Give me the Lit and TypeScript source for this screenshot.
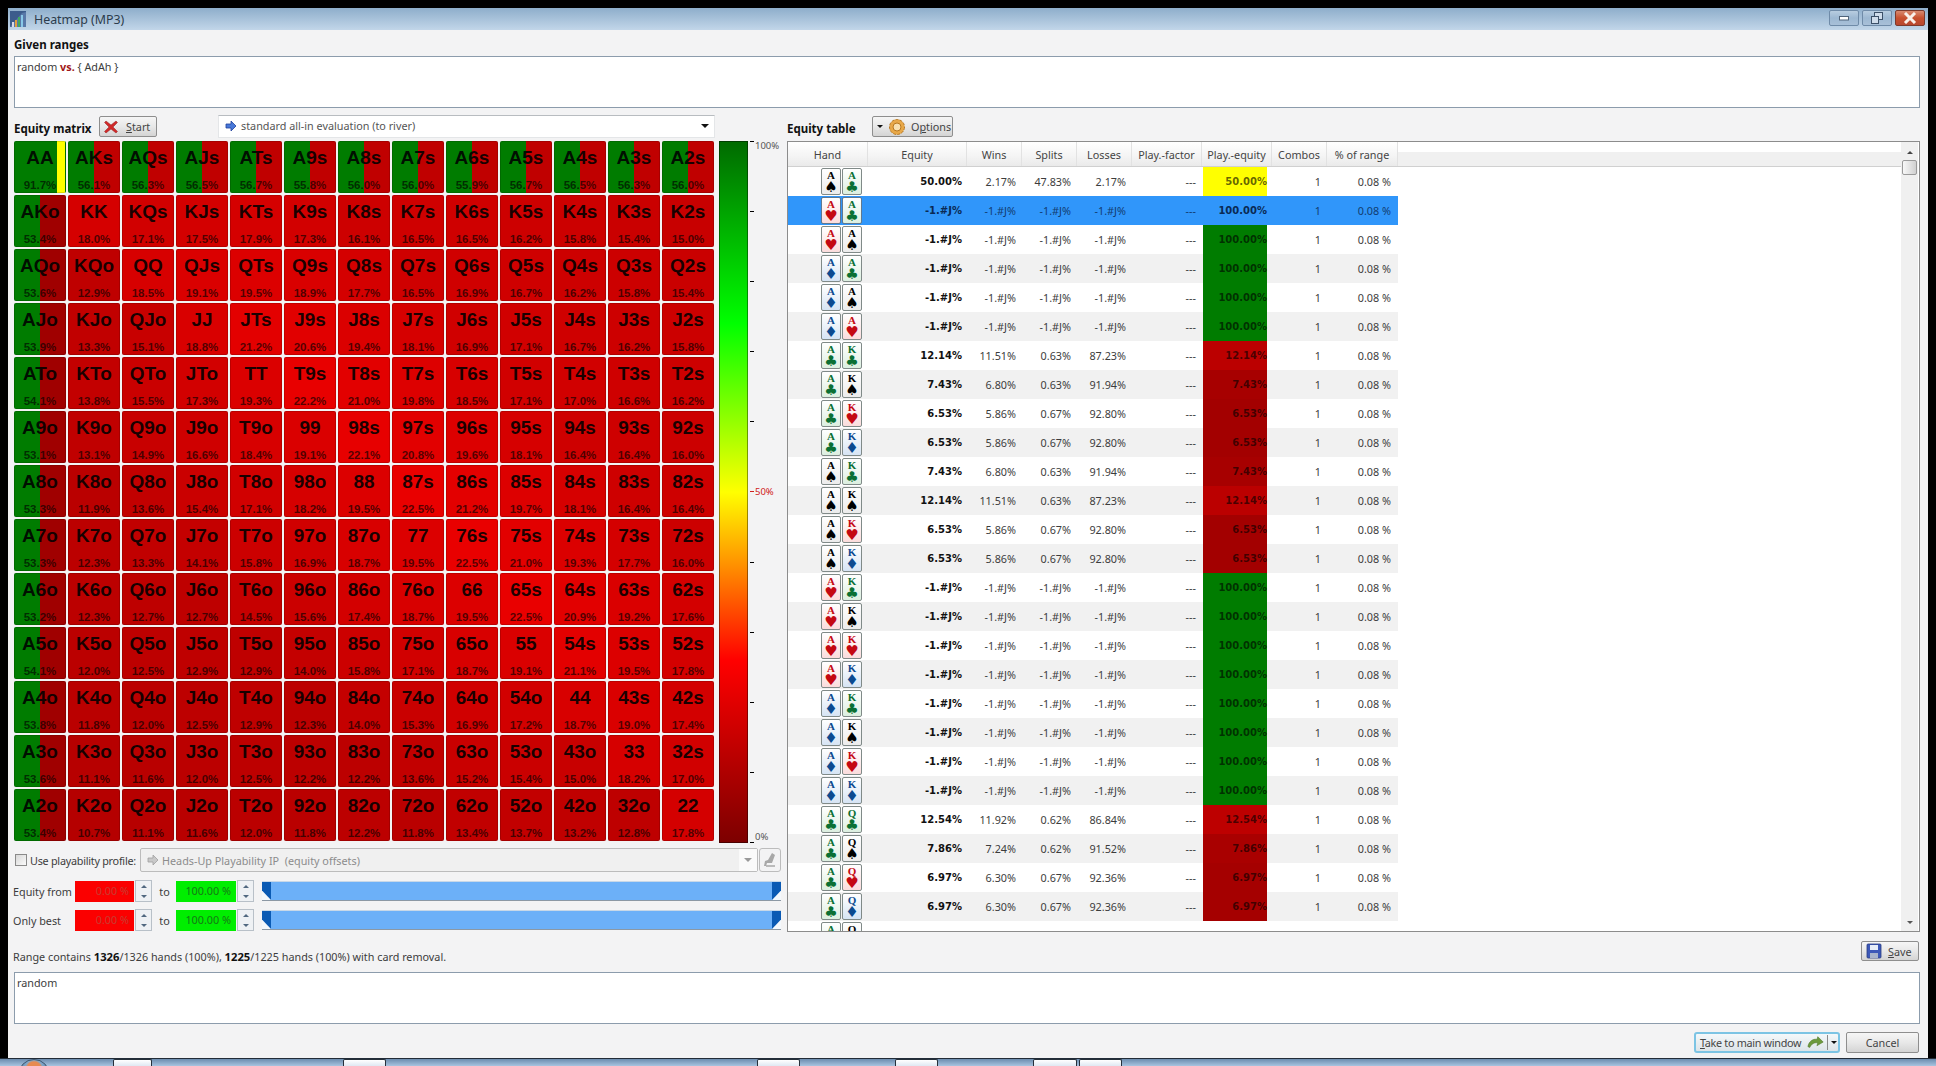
import { LitElement, html, css, svg } from "lit";
import { customElement } from "lit/decorators.js";

const MATRIX = `AA 91.7|AKs 56.1|AQs 56.3|AJs 56.5|ATs 56.7|A9s 55.8|A8s 56.0|A7s 56.0|A6s 55.9|A5s 56.7|A4s 56.5|A3s 56.3|A2s 56.0
AKo 53.4|KK 18.0|KQs 17.1|KJs 17.5|KTs 17.9|K9s 17.3|K8s 16.1|K7s 16.5|K6s 16.5|K5s 16.2|K4s 15.8|K3s 15.4|K2s 15.0
AQo 53.6|KQo 12.9|QQ 18.5|QJs 19.1|QTs 19.5|Q9s 18.9|Q8s 17.7|Q7s 16.5|Q6s 16.9|Q5s 16.7|Q4s 16.2|Q3s 15.8|Q2s 15.4
AJo 53.9|KJo 13.3|QJo 15.1|JJ 18.8|JTs 21.2|J9s 20.6|J8s 19.4|J7s 18.1|J6s 16.9|J5s 17.1|J4s 16.7|J3s 16.2|J2s 15.8
ATo 54.1|KTo 13.8|QTo 15.5|JTo 17.3|TT 19.3|T9s 22.2|T8s 21.0|T7s 19.8|T6s 18.5|T5s 17.1|T4s 17.0|T3s 16.6|T2s 16.2
A9o 53.1|K9o 13.1|Q9o 14.9|J9o 16.6|T9o 18.4|99 19.1|98s 22.1|97s 20.8|96s 19.6|95s 18.1|94s 16.4|93s 16.4|92s 16.0
A8o 53.3|K8o 11.9|Q8o 13.6|J8o 15.4|T8o 17.1|98o 18.2|88 19.5|87s 22.5|86s 21.2|85s 19.7|84s 18.1|83s 16.4|82s 16.4
A7o 53.3|K7o 12.3|Q7o 13.3|J7o 14.1|T7o 15.8|97o 16.9|87o 18.7|77 19.5|76s 22.5|75s 21.0|74s 19.3|73s 17.7|72s 16.0
A6o 53.2|K6o 12.3|Q6o 12.7|J6o 12.7|T6o 14.5|96o 15.6|86o 17.4|76o 18.7|66 19.5|65s 22.5|64s 20.9|63s 19.2|62s 17.6
A5o 54.1|K5o 12.0|Q5o 12.5|J5o 12.9|T5o 12.9|95o 14.0|85o 15.8|75o 17.1|65o 18.7|55 19.1|54s 21.1|53s 19.5|52s 17.8
A4o 53.8|K4o 11.8|Q4o 12.0|J4o 12.5|T4o 12.9|94o 12.3|84o 14.0|74o 15.3|64o 16.9|54o 17.2|44 18.7|43s 19.0|42s 17.4
A3o 53.6|K3o 11.1|Q3o 11.6|J3o 12.0|T3o 12.5|93o 12.2|83o 12.2|73o 13.6|63o 15.2|53o 15.4|43o 15.0|33 18.2|32s 17.0
A2o 53.4|K2o 10.7|Q2o 11.1|J2o 11.6|T2o 12.0|92o 11.8|82o 12.2|72o 11.8|62o 13.4|52o 13.7|42o 13.2|32o 12.8|22 17.8`;

const NA = "-1.#J";
const T = (c1: string, c2: string, e: string, w: string, s: string, l: string) => ({ c1, c2, e, w, s, l });
const X = (c1: string, c2: string) => T(c1, c2, NA, NA, NA, NA);
const ROWS = [
  T("As", "Ac", "50.00", "2.17", "47.83", "2.17"),
  X("Ah", "Ac"), X("Ah", "As"), X("Ad", "Ac"), X("Ad", "As"), X("Ad", "Ah"),
  T("Ac", "Kc", "12.14", "11.51", "0.63", "87.23"),
  T("Ac", "Ks", "7.43", "6.80", "0.63", "91.94"),
  T("Ac", "Kh", "6.53", "5.86", "0.67", "92.80"),
  T("Ac", "Kd", "6.53", "5.86", "0.67", "92.80"),
  T("As", "Kc", "7.43", "6.80", "0.63", "91.94"),
  T("As", "Ks", "12.14", "11.51", "0.63", "87.23"),
  T("As", "Kh", "6.53", "5.86", "0.67", "92.80"),
  T("As", "Kd", "6.53", "5.86", "0.67", "92.80"),
  X("Ah", "Kc"), X("Ah", "Ks"), X("Ah", "Kh"), X("Ah", "Kd"),
  X("Ad", "Kc"), X("Ad", "Ks"), X("Ad", "Kh"), X("Ad", "Kd"),
  T("Ac", "Qc", "12.54", "11.92", "0.62", "86.84"),
  T("Ac", "Qs", "7.86", "7.24", "0.62", "91.52"),
  T("Ac", "Qh", "6.97", "6.30", "0.67", "92.36"),
  T("Ac", "Qd", "6.97", "6.30", "0.67", "92.36"),
];

const GREEN = "#007c00";
const SUITS: Record<string, string> = { s: "♠", h: "♥", d: "♦", c: "♣" };
const redOf = (v: number) => `rgb(${Math.min(255, Math.round(134 + v * 4.4))},0,0)`;

function cellBg(name: string, v: number): string {
  if (name === "AA") return `linear-gradient(90deg,${GREEN} 83%,#ffff00 83% 98%,${GREEN} 98%)`;
  if (name[0] === "A" && v > 50) {
    const red = name.endsWith("s") ? "#c00000" : "#a00000";
    return `linear-gradient(90deg,${GREEN} 50%,${red} 50%)`;
  }
  return redOf(v);
}

const TICKS = [0, 1, 2, 3, 4, 5, 6, 7, 8, 9, 10];

@customElement("app-root")
export class AppRoot extends LitElement {
  static styles = css`
    :host { display: block; width: 1936px; height: 1066px; background: #000; overflow: hidden;
      font-family: "Noto Sans", "Open Sans", sans-serif; font-size: 10.8px; color: #3c3c3c; }
    .shell { width: 1920px; height: 1066px; margin-left: 8px; padding-top: 8px; box-sizing: border-box;
      display: flex; flex-direction: column; }
    .titlebar { height: 22px; flex: none; display: flex; align-items: center; padding-left: 2px;
      background: linear-gradient(#8eaecb, #c2d6e9); }
    .titlebar .ttl { margin-left: 8px; font-size: 12.4px; color: #2c3c4c; }
    .winbtns { margin-left: auto; display: flex; gap: 3px; padding-right: 3px; align-self: flex-start; margin-top: 2px; }
    .wb { width: 30px; height: 16px; border: 1px solid #6f8ba8; border-radius: 2px; box-sizing: border-box;
      background: linear-gradient(#b8cde0, #9db8d2 50%, #a8c0d8); display: flex; align-items: center; justify-content: center; }
    .wb.close { background: linear-gradient(#d88a70, #c8502e 50%, #b84830); border-color: #7c3a2c; }
    .body { flex: 1; background: #f3f3f4; display: flex; flex-direction: column; padding: 0 8px 0 6px; min-height: 0; }
    .b { font-weight: 700; color: #111; font-size: 11.5px; }
    .sect { height: 14px; line-height: 14px; margin-top: 8px; }
    .memo { background: #fff; border: 1px solid #8c9cac; box-sizing: border-box; height: 52px; padding: 3px 2px; line-height: 13px; }
    .memo.top { margin-top: 4px; }
    .vs { color: #a01818; font-weight: 700; }
    .main { display: flex; margin-top: 7px; height: 817px; flex: none; }
    .left { width: 767px; flex: none; display: flex; flex-direction: column; }
    .right { width: 1133px; margin-left: 6px; flex: none; display: flex; flex-direction: column; }
    .hdr { height: 26px; flex: none; display: flex; align-items: center; }
    .hdr .b { width: 85px; flex: none; white-space: nowrap; }
    .btn { display: flex; align-items: center; box-sizing: border-box; height: 20px; border: 1px solid #8e8e8e; border-radius: 2px;
      background: linear-gradient(#f6f6f6, #e8e8e8 50%, #d4d4d4); color: #444; white-space: nowrap; }
    .btn svg { flex: none; }
    .start { width: 58px; height: 21px; padding-left: 4px; gap: 8px; align-self: flex-start; margin-top: 1px; }
    .opts { width: 81px; height: 21px; padding-left: 4px; gap: 3px; align-self: flex-start; margin-top: 1px; }
    .opts .ic { margin-left: 1px; }
    .opts .tx { margin-left: 1px; }
    .combo { margin-left: 61px; width: 497px; height: 23px; box-sizing: border-box; background: #fff; border: 1px solid #e4e6e8; border-top-color: #b8bcc0;
      display: flex; align-items: center; padding: 0 0 2px 6px; gap: 4px; color: #555; align-self: flex-start; }
    .combo .arr { margin-left: auto; width: 19px; display: flex; justify-content: center; }
    .caret { width: 0; height: 0; border-left: 4px solid transparent; border-right: 4px solid transparent; border-top: 4px solid #111; flex: none; }
    .caret.sm { border-width: 3px 3px 0; }
    .matrixrow { display: flex; height: 702px; flex: none; }
    .matrix { width: 702px; height: 702px; flex: none; display: grid; grid-template-columns: repeat(13, 52px); grid-auto-rows: 52px; gap: 2px; }
    .cell { border-radius: 2px; box-shadow: inset 0 0 0 1px rgba(0,0,0,.14); display: flex; flex-direction: column; align-items: center;
      font-family: "Liberation Sans", Arial, sans-serif; font-weight: 700; }
    .cell .n { font-size: 19px; line-height: 22px; margin-top: 6px; color: rgba(0,0,0,.88); }
    .cell .p { font-size: 11.5px; line-height: 14px; margin-top: 9px; color: rgba(0,0,0,.65); }
    .bar { width: 29px; margin-left: 3px; flex: none; height: 702px; box-shadow: inset 0 0 0 1px rgba(0,0,0,.4);
      background: linear-gradient(#006a00 0, #00ff00 26%, #ffff00 50%, #ff0000 74%, #7c0000 100%); }
    .scale { flex: 1; display: flex; flex-direction: column; justify-content: space-between; height: 702px; padding-left: 2px; }
    .tick { height: 1px; display: flex; align-items: center; gap: 1px; font-size: 9.5px; color: #555; white-space: nowrap; }
    .tick i { width: 4px; height: 1px; background: #000; flex: none; }
    .tick.red { color: #d02020; }
    .tick.red i { background: #d02020; }
    .tick.first span { margin-top: 8px; }
    .tick.last span { margin-top: -11px; }
    .play { display: flex; height: 24px; margin-top: 5px; align-items: center; flex: none; }
    .check { width: 12px; height: 12px; border: 1px solid #8a8a8a; background: linear-gradient(135deg,#d8d8d8,#fafafa); box-sizing: border-box; margin-left: 1px; flex: none; }
    .play .lbl { margin-left: 3px; width: 110px; flex: none; white-space: nowrap; letter-spacing: -.25px; }
    .pcombo { width: 618px; height: 24px; box-sizing: border-box; border: 1px solid #bcbcbc; border-radius: 2px; background: #f0f0f0; display: flex; align-items: center; padding-left: 6px; gap: 3px; color: #8c8c8c; flex: none; }
    .pcombo .arr { margin-left: auto; width: 18px; height: 22px; background: #fafafa; display: flex; align-items: center; justify-content: center; }
    .pcombo .caret { border-top-color: #999; }
    .pen { width: 22px; height: 24px; margin-left: 1px; box-sizing: border-box; border: 1px solid #bcbcbc; border-radius: 3px; display: flex; align-items: center; justify-content: center; flex: none; }
    .range { display: flex; height: 22px; align-items: center; margin-top: 7px; flex: none; }
    .range.first { margin-top: 8px; }
    .range .lbl { width: 62px; flex: none; margin-left: -1px; white-space: nowrap; }
    .num { width: 59px; height: 21px; box-sizing: border-box; text-align: right; padding-right: 5px; line-height: 19px; flex: none; }
    .num.r { background: #fb0000; color: #c83c30; }
    .num.g { background: #00ee00; color: #167a16; width: 60px; }
    .spin { width: 17px; height: 22px; box-sizing: border-box; margin-left: 1px; border: 1px solid #b8c0c8; background: #eef1f4; display: flex; flex-direction: column; align-items: center; justify-content: space-around; flex: none; }
    .spin i { width: 0; height: 0; border-left: 3px solid transparent; border-right: 3px solid transparent; }
    .spin i.u { border-bottom: 3px solid #506880; }
    .spin i.d { border-top: 3px solid #506880; }
    .to { width: 23px; text-align: center; flex: none; margin-left: 1px; }
    .slider { margin-left: 8px; width: 519px; height: 20px; display: flex; flex: none; border-top: 1px solid #c8d8e8; border-bottom: 1px solid #8c98a4; box-sizing: border-box; }
    .slider .fill { flex: 1; background: #6cb0f8; }
    .slider svg { flex: none; display: block; }
    .tablebox { height: 791px; flex: none; border: 1px solid #8c8c8c; box-sizing: border-box; background: #fff; display: flex; }
    .grid { flex: 1; overflow: hidden; min-width: 0; }
    .thead { display: flex; height: 25px; background: linear-gradient(#fff 0 10px, #f0f0f0 10px); border-bottom: 1px solid #d0d0d0; box-sizing: border-box; }
    .th { box-sizing: border-box; flex: none; text-align: center; line-height: 21px; padding-top: 2px; color: #444; background: linear-gradient(#fff, #f4f4f4 60%, #eaeaea); border-right: 1px solid #e2e2e2; white-space: nowrap; }
    .th.w80 { width: 80px; } .th.w99 { width: 99px; } .th.w55 { width: 55px; } .th.w70 { width: 70px; } .th.w71 { width: 71px; }
    .tr { display: flex; height: 29px; align-items: stretch; width: 610px; background: #fff; }
    .tr.alt { background: #f1f1f1; }
    .tr.sel { background: #3096fa; color: #123c70; }
    .td { box-sizing: border-box; flex: none; text-align: right; line-height: 29px; padding-right: 6px; }
    .td.eq { font: 700 10px/29px "DejaVu Sans", sans-serif; color: #111; padding-right: 5px; }
    .tr.sel .td.eq { color: #0a2a54; }
    .c-hand { width: 80px; display: flex; padding: 1px 0 0 33px; gap: 1px; box-sizing: border-box; flex: none; }
    .c-eq { width: 99px; } .c-n { width: 55px; } .c-pf { width: 70px; }
    .c-pe { width: 70px; padding: 0 0 0 1px; flex: none; }
    .c-cb { width: 55px; } .c-pr { width: 71px; padding-right: 7px; }
    .pe { width: 64px; height: 29px; text-align: right; font: 700 10px/29px "DejaVu Sans", sans-serif; color: rgba(0,0,0,.62); }
    .tr.sel .pe { background: transparent; color: #0a2a54; }
    .card { width: 20px; height: 27px; box-sizing: border-box; border: 1px solid #808a88; border-radius: 2px; display: flex; flex-direction: column; align-items: center; overflow: hidden; }
    .card b { font: 700 11px/11px "Liberation Serif", serif; margin-top: 1px; height: 11px; }
    .card em { font: normal 15px/13px "DejaVu Sans", sans-serif; height: 13px; }
    .card.s { background: linear-gradient(#fff, #ececec); color: #000; }
    .card.c { background: linear-gradient(#fff, #dcefe0); color: #0a7034; }
    .card.h { background: linear-gradient(#fff, #fbdcdc); color: #c40812; }
    .card.d { background: linear-gradient(#fff, #d6e4f4); color: #0c4a90; }
    .tr.sel .card { border-color: #607890; }
    .sb { width: 17px; flex: none; background: #f0f0f0; display: flex; flex-direction: column; align-items: center; padding-bottom: 7px; box-sizing: border-box; margin-right: 1px; }
    .sb .up { margin-top: 9px; border-left: 3px solid transparent; border-right: 3px solid transparent; border-bottom: 3px solid #444; }
    .sb .thumb { margin-top: 6px; width: 15px; height: 15px; box-sizing: border-box; border: 1px solid #9a9a9a; border-radius: 2px; background: linear-gradient(90deg,#f8f8f8,#d0d0d0); }
    .sb .dn { margin-top: auto; border-left: 3px solid transparent; border-right: 3px solid transparent; border-top: 3px solid #555; }
    .status { height: 39px; flex: none; display: flex; align-items: flex-start; margin-top: 1px; }
    .status .txt { margin-top: 17px; margin-left: -1px; line-height: 14px; white-space: nowrap; }
    .status .txt .b { font-size: 11.2px; }
    .save { margin-left: auto; margin-top: 8px; width: 58px; height: 20px; padding-left: 4px; gap: 6px; margin-right: 1px; }
    .actions { display: flex; justify-content: flex-end; margin-top: 8px; gap: 6px; padding-right: 1px; }
    .take { width: 146px; height: 21px; border: 2px solid #7cc4e4; border-radius: 3px; background: linear-gradient(#f4f8fa, #dde4e8); padding-left: 4px; letter-spacing: -.3px; }
    .take .ar { margin-left: 6px; }
    .take .sep { width: 1px; height: 15px; background: #8a8a8a; margin-left: 2px; flex: none; }
    .take .caret { margin-left: 3px; }
    .cancel { width: 73px; height: 21px; justify-content: center; }
    u { text-decoration: underline; }
    .taskbar { height: 8px; flex: none; margin-left: -8px; width: 1936px; background: linear-gradient(#6c8cae, #a8c4e0); border-top: 1px solid #222c38; box-sizing: border-box; display: flex; overflow: hidden; }
    .orb { width: 32px; height: 32px; border-radius: 50%; margin-left: 18px; flex: none; background: radial-gradient(circle at 50% 30%, #e88a50 0 7px, #7fa8cc 9px, #5a7a9a 16px); border: 1px solid #405870; box-sizing: border-box; }
    .tab { flex: none; background: linear-gradient(#fff, #dfe8f2); border: 1px solid #26303a; border-bottom: 0; border-radius: 2px 2px 0 0; box-sizing: border-box; }
    .t1 { margin-left: 63px; width: 39px; } .t2 { margin-left: 191px; width: 43px; } .t3 { margin-left: 371px; width: 43px; }
    .t4 { margin-left: 95px; width: 43px; } .t5 { margin-left: 95px; width: 44px; } .t6 { margin-left: 2px; width: 43px; }
  `;

  card(c: string) {
    return html`<div class="card ${c[1]}"><b>${c[0]}</b><em>${SUITS[c[1]]}</em></div>`;
  }

  row(r: (typeof ROWS)[number], i: number) {
    const sel = i === 1;
    const na = r.e === NA;
    const pv = na ? 100 : parseFloat(r.e);
    const pBg = i === 0 ? "#ffff00" : na ? GREEN : redOf(pv);
    const cls = sel ? "tr sel" : i % 2 ? "tr alt" : "tr";
    return html`<div class=${cls}>
      <div class="c-hand">${this.card(r.c1)}${this.card(r.c2)}</div>
      <div class="td eq c-eq">${r.e}%</div>
      <div class="td c-n">${r.w}%</div>
      <div class="td c-n">${r.s}%</div>
      <div class="td c-n">${r.l}%</div>
      <div class="td c-pf">---</div>
      <div class="td c-pe"><div class="pe" style=${sel ? "" : `background:${pBg}`}>${na ? "100.00" : r.e}%</div></div>
      <div class="td c-cb">1</div>
      <div class="td c-pr">0.08 %</div>
    </div>`;
  }

  handle(right: boolean) {
    return html`<svg width="9" height="18" viewBox="0 0 9 19" preserveAspectRatio="none">
      <rect width="9" height="19" fill="#f4f8fc"/>
      ${right
        ? svg`<polygon points="0,0 9,0 9,9 0,19" fill="#0a5ab4"/>`
        : svg`<polygon points="0,0 9,0 9,19 0,9" fill="#0a5ab4"/>`}
    </svg>`;
  }

  rangeRow(label: string, first: boolean) {
    const spin = html`<div class="spin"><i class="u"></i><i class="d"></i></div>`;
    return html`<div class="range ${first ? "first" : ""}">
      <div class="lbl">${label}</div>
      <div class="num r">0.00 %</div>${spin}
      <div class="to">to</div>
      <div class="num g">100.00 %</div>${spin}
      <div class="slider">${this.handle(false)}<div class="fill"></div>${this.handle(true)}</div>
    </div>`;
  }

  render() {
    const cells = MATRIX.split("\n").flatMap((l) => l.split("|"));
    const arrow = (c1: string, c2: string) => html`<svg width="12" height="12" viewBox="0 0 12 12"><path d="M1 4h5V1l5 5-5 5V8H1z" fill=${c1} stroke=${c2} stroke-width=".8"/></svg>`;
    return html`<div class="shell">
      <div class="titlebar">
        <svg width="16" height="16" viewBox="0 0 16 16"><rect width="16" height="16" fill="#3c5c8c"/><path d="M0 16 12 2l4-1v15z" fill="#5878a8"/><rect x="2" y="11" width="2" height="5" fill="#d8d8e8"/><rect x="5" y="9" width="2" height="7" fill="#e0a040"/><rect x="8" y="6" width="2" height="10" fill="#40a860"/><rect x="11" y="4" width="2" height="12" fill="#88c8e8"/></svg>
        <span class="ttl">Heatmap (MP3)</span>
        <div class="winbtns">
          <div class="wb"><svg width="10" height="5"><rect x=".5" y=".5" width="9" height="3.500" fill="#fff" stroke="#50647a"/></svg></div>
          <div class="wb"><svg width="12" height="12"><rect x="3.500" y=".5" width="8" height="7" fill="#cfdcea" stroke="#3c5068"/><rect x=".5" y="4.500" width="7" height="7" fill="#cfdcea" stroke="#3c5068"/></svg></div>
          <div class="wb close"><svg width="14" height="12"><path d="M2 1l10 10M12 1 2 11" stroke="#f8f0ea" stroke-width="3"/></svg></div>
        </div>
      </div>
      <div class="body">
        <div class="sect b">Given ranges</div>
        <div class="memo top">random <span class="vs">vs.</span> { AdAh }</div>
        <div class="main">
          <div class="left">
            <div class="hdr">
              <div class="b">Equity matrix</div>
              <div class="btn start"><svg width="14" height="14" viewBox="0 0 14 14"><path d="M2 1l5 4 5-4 1.500 1.500-4.500 4.500 4.500 4.500-1.500 1.500-5-4-5 4-1.500-1.500 4.500-4.500-4.500-4.500z" fill="#d02828" stroke="#902020" stroke-width=".5"/></svg><span><u>S</u>tart</span></div>
              <div class="combo">${arrow("#4878d8", "#20409c")}<span>standard all-in evaluation (to river)</span><div class="arr"><div class="caret"></div></div></div>
            </div>
            <div class="matrixrow">
              <div class="matrix">
                ${cells.map((c) => {
                  const [n, p] = c.split(" ");
                  return html`<div class="cell" style="background:${cellBg(n, parseFloat(p))}"><div class="n">${n}</div><div class="p">${p}%</div></div>`;
                })}
              </div>
              <div class="bar"></div>
              <div class="scale">
                ${TICKS.map((t) => {
                  const label = t === 0 ? "100%" : t === 5 ? "50%" : t === 10 ? "0%" : "";
                  const c = t === 0 ? "first" : t === 5 ? "red" : t === 10 ? "last" : "";
                  return html`<div class="tick ${c}"><i></i><span>${label}</span></div>`;
                })}
              </div>
            </div>
            <div class="play">
              <div class="check"></div>
              <div class="lbl">Use playability profile:</div>
              <div class="pcombo">${arrow("#c8c8c8", "#a0a0a0")}<span>Heads-Up Playability IP&nbsp; (equity offsets)</span><div class="arr"><div class="caret"></div></div></div>
              <div class="pen"><svg width="14" height="16" viewBox="0 0 14 16"><path d="M9 1l3 2-3 8H4L3 14H1l1-5 3-1z" fill="#a8a8a8"/><path d="M3 14h9" stroke="#a8a8a8" stroke-width="1.500"/></svg></div>
            </div>
            ${this.rangeRow("Equity from", true)}
            ${this.rangeRow("Only best", false)}
          </div>
          <div class="right">
            <div class="hdr">
              <div class="b">Equity table</div>
              <div class="btn opts">
                <div class="caret sm"></div>
                <svg class="ic" width="20" height="18" viewBox="0 0 20 18"><circle cx="10" cy="9" r="7.500" fill="#e8a848" stroke="#b87820" stroke-dasharray="3 1.200"/><circle cx="10" cy="9" r="4" fill="#f8e0b0" stroke="#b87820"/></svg>
                <span class="tx">O<u>p</u>tions</span>
              </div>
            </div>
            <div class="tablebox">
              <div class="grid">
                <div class="thead">
                  <div class="th w80">Hand</div>
                  <div class="th w99">Equity</div>
                  <div class="th w55">Wins</div>
                  <div class="th w55">Splits</div>
                  <div class="th w55">Losses</div>
                  <div class="th w70">Play.-factor</div>
                  <div class="th w70">Play.-equity</div>
                  <div class="th w55">Combos</div>
                  <div class="th w71">% of range</div>
                </div>
                ${ROWS.map((r, i) => this.row(r, i))}
                <div class="tr"><div class="c-hand">${this.card("Ac")}${this.card("Qs")}</div></div>
              </div>
              <div class="sb"><div class="up"></div><div class="thumb"></div><div class="dn"></div></div>
            </div>
          </div>
        </div>
        <div class="status">
          <div class="txt">Range contains <span class="b">1326</span>/1326 hands (100%), <span class="b">1225</span>/1225 hands (100%) with card removal.</div>
          <div class="btn save"><svg width="16" height="16" viewBox="0 0 16 16"><rect x="1" y="1" width="14" height="14" rx="1" fill="#3c58b8" stroke="#283c80" stroke-width=".8"/><rect x="4" y="2" width="8" height="5" fill="#e8eef8"/><rect x="4" y="10" width="8" height="5" fill="#a8b4cc"/></svg><span><u>S</u>ave</span></div>
        </div>
        <div class="memo">random</div>
        <div class="actions">
          <div class="btn take"><span><u>T</u>ake to main window</span>
            <svg class="ar" width="18" height="14" viewBox="0 0 20 14"><path d="M1 11c1-6 6-9 10-8l1-3 6 6-7 4 1-3c-4-1-7 1-9 5z" fill="#6c9a3c" stroke="#4c7428" stroke-width=".6"/></svg>
            <div class="sep"></div><div class="caret sm"></div></div>
          <div class="btn cancel">Cancel</div>
        </div>
      </div>
      <div class="taskbar">
        <div class="orb"></div>
        <div class="tab t1"></div><div class="tab t2"></div><div class="tab t3"></div>
        <div class="tab t4"></div><div class="tab t5"></div><div class="tab t6"></div>
      </div>
    </div>`;
  }
}
